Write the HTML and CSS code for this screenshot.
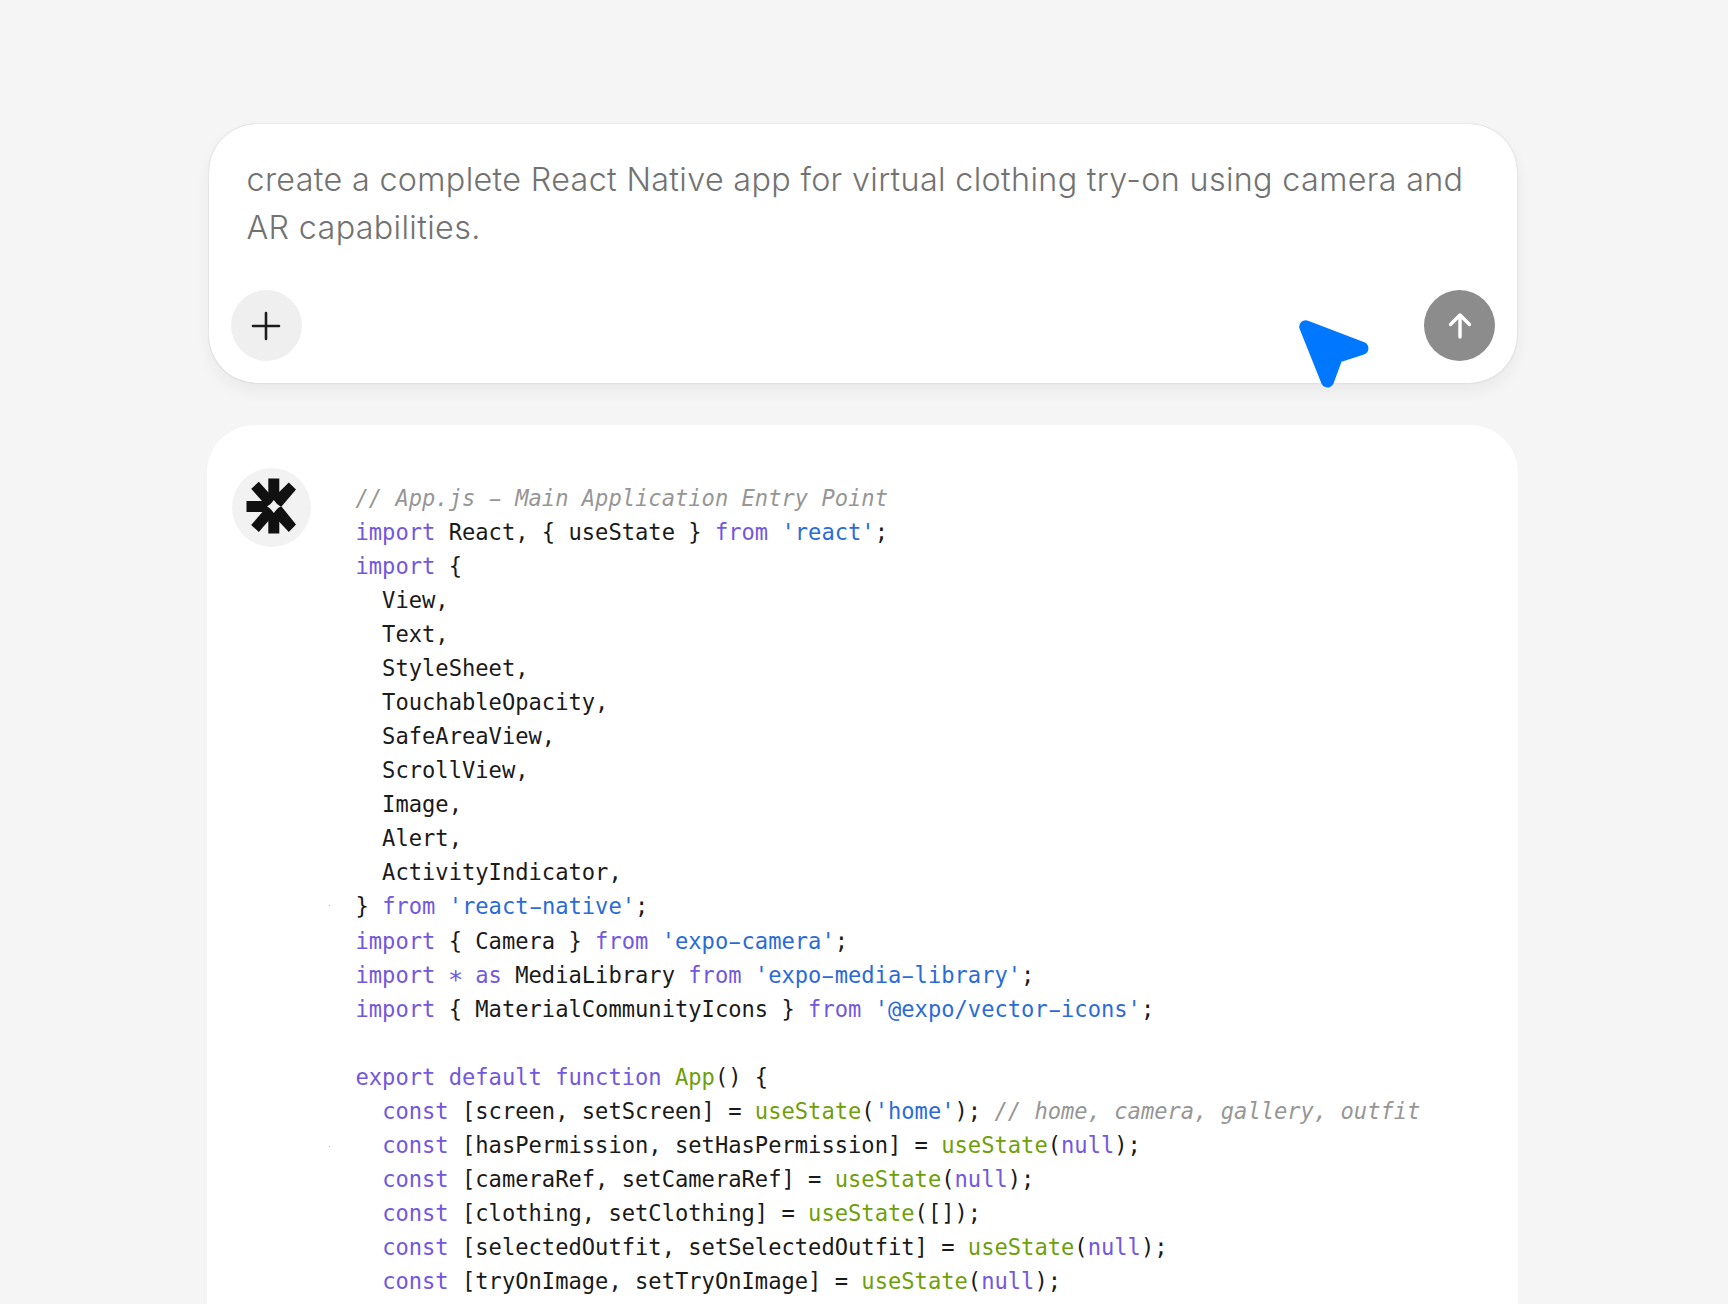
FILE: index.html
```html
<!DOCTYPE html>
<html lang="en">
<head>
<meta charset="utf-8">
<title>Prompt</title>
<link rel="stylesheet" href="styles.css">
</head>
<body>
<main class="stage">
  <section class="prompt-card">
    <p class="prompt-text">create a complete React Native app for virtual clothing try-on using camera and AR capabilities.</p>
    <div class="prompt-actions">
      <button class="round-btn add-btn" aria-label="Add">
        <svg width="32" height="32" viewBox="0 0 32 32"><path d="M16 3v26M3 16h26" stroke="#1c1c1c" stroke-width="2.600" stroke-linecap="round" fill="none"/></svg>
      </button>
      <button class="round-btn send-btn" aria-label="Send">
        <svg width="32" height="32" viewBox="0 0 32 32"><path d="M16 27V5M6.500 14.500 16 5l9.500 9.500" stroke="#fff" stroke-width="3.400" stroke-linecap="round" stroke-linejoin="round" fill="none"/></svg>
      </button>
    </div>
    <svg class="cursor" width="90" height="90" viewBox="0 0 90 90"><path d="M15.700 16.700 72 38.300 46.500 46.500 37.500 71Z" fill="#0077ff" stroke="#0077ff" stroke-width="13" stroke-linejoin="round"/></svg>
  </section>
  <section class="answer-card">
    <i class="speck speck-a"></i>
    <i class="speck speck-b"></i>
    <div class="avatar">
      <svg width="64" height="64" viewBox="-0.500 5.500 64 64">
        <g fill="#111">
          <path d="M27.800 8H38.800V36H27.800Z"/>
          <path d="M6 30.500H36V41.500H6Z"/>
          <path d="M27.800 36H38.800V63H27.800Z"/>
          <path d="M10.700 18.300 18.300 11.300 37 32 30 40Z"/>
          <path d="M48.300 12 55.500 19 41 36H30V30Z"/>
          <path d="M10.700 54.500 18.300 61.500 37 40 30 32Z"/>
          <path d="M55.500 54 48.300 61.500 30 42V36H41Z"/>
        </g>
        <path fill="#f2f2f2" d="M33.300 29.500Q35.800 33.500 40 36 35.800 38.500 33.300 42.500 30.800 38.500 26.600 36 30.800 33.500 33.300 29.500Z"/>
      </svg>
    </div>
<pre class="code"><span class="c">// App.js <span class="h">-</span> Main Application Entry Point</span>
<span class="k">import</span> React, { useState } <span class="k">from</span> <span class="s">'react'</span>;
<span class="k">import</span> {
  View,
  Text,
  StyleSheet,
  TouchableOpacity,
  SafeAreaView,
  ScrollView,
  Image,
  Alert,
  ActivityIndicator,
} <span class="k">from</span> <span class="s">'react<span class="h">-</span>native'</span>;
<span class="k">import</span> { Camera } <span class="k">from</span> <span class="s">'expo<span class="h">-</span>camera'</span>;
<span class="k">import</span> <span class="k star">*</span> <span class="k">as</span> MediaLibrary <span class="k">from</span> <span class="s">'expo<span class="h">-</span>media<span class="h">-</span>library'</span>;
<span class="k">import</span> { MaterialCommunityIcons } <span class="k">from</span> <span class="s">'@expo/vector<span class="h">-</span>icons'</span>;

<span class="k">export</span> <span class="k">default</span> <span class="k">function</span> <span class="f">App</span>() {
  <span class="k">const</span> [screen, setScreen] = <span class="f">useState</span>(<span class="s">'home'</span>); <span class="c">// home, camera, gallery, outfit</span>
  <span class="k">const</span> [hasPermission, setHasPermission] = <span class="f">useState</span>(<span class="k">null</span>);
  <span class="k">const</span> [cameraRef, setCameraRef] = <span class="f">useState</span>(<span class="k">null</span>);
  <span class="k">const</span> [clothing, setClothing] = <span class="f">useState</span>([]);
  <span class="k">const</span> [selectedOutfit, setSelectedOutfit] = <span class="f">useState</span>(<span class="k">null</span>);
  <span class="k">const</span> [tryOnImage, setTryOnImage] = <span class="f">useState</span>(<span class="k">null</span>);
</pre>
  </section>
</main>
</body>
</html>
```
FILE: styles.css
```css
html, body {
  margin: 0;
  height: 1304px;
  overflow: hidden;
  background: #f5f5f5;
}
.stage {
  display: flex;
  flex-direction: column;
  align-items: center;
  padding: 124px 3px 0 0;
  gap: 42px;
}
.prompt-card {
  position: relative;
  box-sizing: border-box;
  width: 1308px;
  height: 259px;
  padding: 32px 21.5px 22px 22px;
  display: flex;
  flex-direction: column;
  justify-content: space-between;
  background: #fff;
  border-radius: 48px;
  box-shadow: 0 0 1.5px rgba(0,0,0,.22), 0 8px 16px rgba(0,0,0,.05);
}
.prompt-text {
  margin: 0;
  padding: 0 10px 0 16px;
  font: 350 32.3px/47.6px Inter, sans-serif;
  letter-spacing: .34px;
  color: #727272;
}
.prompt-actions {
  display: flex;
  justify-content: space-between;
}
.round-btn {
  width: 71px;
  height: 71px;
  padding: 0;
  border: 0;
  border-radius: 50%;
  display: flex;
  align-items: center;
  justify-content: center;
}
.add-btn { background: #efefef; }
.send-btn { background: #8c8c8c; }
.cursor {
  position: absolute;
  left: 1081.5px;
  top: 186px;
}
.answer-card {
  position: relative;
  box-sizing: border-box;
  width: 1311px;
  height: 900px;
  padding: 43px 25px 0;
  display: flex;
  gap: 44.5px;
  background: #fff;
  border-radius: 48px 48px 0 0;
}
.speck {
  position: absolute;
  left: 122px;
  width: 1px;
  height: 1px;
  background: #bdbdbd;
}
.speck-a { top: 480px; }
.speck-b { top: 721px; }
.avatar {
  flex: none;
  width: 79px;
  height: 79px;
  border-radius: 50%;
  background: #f2f2f2;
  display: flex;
  align-items: center;
  justify-content: center;
}
.code {
  margin: 12.7px 0 0;
  font: 400 22.11px/34.06px "DejaVu Sans Mono", monospace;
  color: #1a1a1a;
}
.k { color: #7257e0; }
.s { color: #2a6bd8; }
.f { color: #6f9f0a; }
.c { color: #969696; font-style: italic; }
.h {
  display: inline-block;
  transform: scaleX(1.8);
}
.star {
  display: inline-block;
  transform: translateY(4px) scale(1.15);
}
```
